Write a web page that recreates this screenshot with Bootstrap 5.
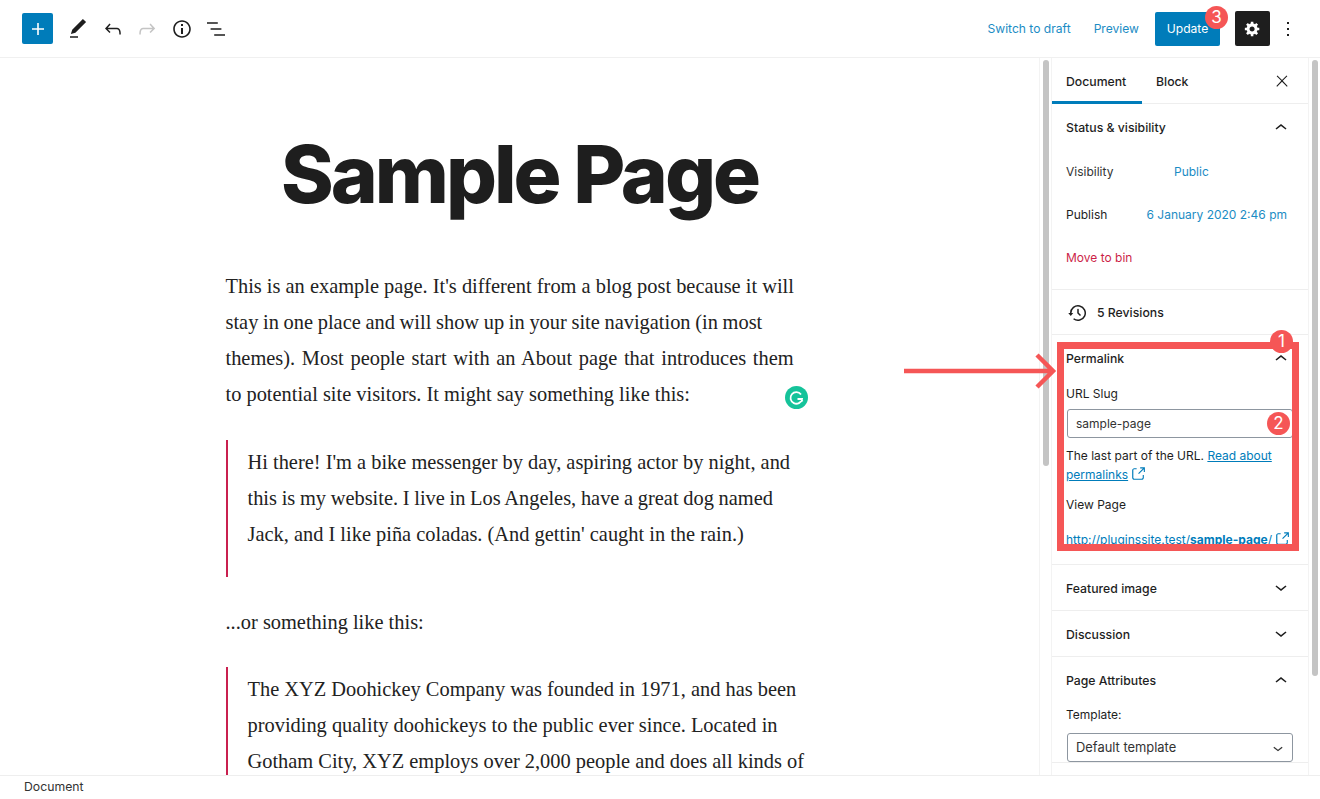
<!DOCTYPE html>
<html lang="en">
<head>
<meta charset="utf-8">
<title>Sample Page</title>
<link rel="stylesheet" href="https://cdn.jsdelivr.net/npm/bootstrap@5.3.0/dist/css/bootstrap.min.css">
<style>
html,body{height:100%;overflow:hidden}
body{font-family:Inter,"Liberation Sans",sans-serif;font-size:12px;color:#1e1e1e;background:#fff;position:relative}
svg{fill:currentColor;display:block;flex:none}
.wp-shell{height:799px}
.wp-top{height:58px;border-bottom:1px solid #f0f0f0;padding:0 20px 0 22px}
.wp-add{width:31px;height:31px;background:#007cba;border-radius:2px;color:#fff;padding:0}
.wp-tool{width:24px;height:24px;color:#1e1e1e}
.wp-tools{gap:10.5px;margin-left:13px}
.wp-dim{color:#c4c4c4}
.wp-link{color:#1b8cc4;font-size:12.1px;text-decoration:none;padding-top:2px}
.wp-gap-a{margin-right:23px}
.wp-update{background:#007cba;color:#fff;font-size:12.1px;width:65px;height:34px;padding:1px 0 0;margin-top:1px;border-radius:2px;border:0}
.wp-gear{width:35px;height:35px;background:#1e1e1e;color:#fff;border-radius:2px;padding:0;border:0;margin-left:15px}
.wp-kebab{margin-left:6px}
.wp-main{height:717px;overflow:hidden}
.wp-canvas{width:1040px;overflow:hidden;height:100%;border-right:1px solid #f3f3f3}
.wp-title{font-family:Inter,"Liberation Sans",sans-serif;font-weight:800;font-size:80px;letter-spacing:-3px;line-height:1;text-align:center;margin:76px 0 0;color:#1e1e1e}
.wp-column{width:588px;margin:54px auto 0;font-family:"Liberation Serif",serif;font-size:20.4px;line-height:36px;color:#222;white-space:nowrap}
.wp-para{margin:0}
.wp-wide{word-spacing:1.6px}
.wp-tight{word-spacing:-.4px}
.wp-quote{border-left:2px solid #c9204f;padding:4px 0 0 20px;margin:28px 0 27px;height:137px}
.wp-quote-b{height:200px;margin:27px 0 0;padding-top:4px}
.wp-thumb{background:#c4c4c4;width:6px;border-radius:3px}
.wp-rail{width:11px;padding-top:2px}
.wp-thumb-a{height:406px}
.wp-thumb-b{height:616px}
.wp-side{width:258px;border-left:1px solid #f3f3f3;border-right:1px solid #f3f3f3;overflow:hidden;height:100%}
.wp-rail-b{width:11px;padding:2px 0 0 3px}
.wp-tabs{height:46px;border-bottom:1px solid #eee;padding-right:17px}
.wp-tab{font-weight:500;font-size:12.25px;height:46px;padding:0 14px;line-height:47px}
.wp-tab-on{border-bottom:3px solid #007cba;width:90px}
.wp-sect{border-bottom:1px solid #eee;padding:0 15px 0 14px}
.wp-head{font-weight:500;font-size:12.25px;height:46px;color:#1e1e1e}
.wp-sect.wp-head{padding-top:3px}
.wp-down{margin-top:-4px}
.wp-close{width:18px;height:18px;margin-top:14px}
.wp-status{height:186px;padding-top:1px}
.wp-row{height:42.5px}
.wp-vlabel{width:108px;color:#333}
.wp-blue{color:#1b8cc4}
.wp-date{margin-right:6px}
.wp-bin{color:#cc1f48;padding-top:1px}
.wp-rev{height:45px;font-weight:500;font-size:12.25px;gap:7px;padding-top:2px}
.wp-perma{height:230px;padding-top:1px}
.wp-lab{line-height:20px}
.wp-lab-a{margin-top:2px}
.wp-slug{display:block;width:226px;height:29px;border:1px solid #8d96a0;border-radius:3px;padding:0 8px;font-size:12px;color:#333;background:#fff;margin:5px 0 8px 1px;outline:0}
.wp-help{line-height:19px;margin:0}
.wp-help a,.wp-perma-link{color:#007cba}
.wp-help svg,.wp-perma-link svg{display:inline-block;vertical-align:-4px}
.wp-ext-a{margin-left:-3px}
.wp-ext-b{margin-left:-2px}
.wp-lab-b{margin-top:11px}
.wp-perma-link{text-decoration:none;white-space:nowrap;display:block;margin-top:15px}
.wp-perma-link span{text-decoration:underline}
.wp-pad{padding-top:1px}
.wp-select{width:226px;height:29px;border:1px solid #8d96a0;border-radius:3px;padding:0 4px 0 8px;margin:8px 0 0 1px;color:#333;font-size:12.9px}
.wp-lab-c{margin-top:1px}
.wp-foot{height:24px;border-top:1px solid #eee;padding-left:24px;background:#fff;position:relative;color:#333;font-size:12.25px}
.wp-box{position:absolute;left:1057px;top:342px;width:242px;height:209px;border:7px solid #f55656;pointer-events:none}
.wp-num{position:absolute;width:23px;height:23px;border-radius:50%;background:#f55656;color:#fff;font-size:17px;line-height:23px;text-align:center}
.wp-n1{left:1270px;top:330px}
.wp-n2{left:1267px;top:412px}
.wp-n3{left:1205px;top:6px}
.wp-arrow{position:absolute;left:904px;top:352px;color:#f55656}
.wp-gram{position:absolute;left:785px;top:386px}
.wp-ico18{width:18px;height:18px}
.wp-ico20{width:20px;height:20px}
.wp-chev{width:24px;height:24px}
</style>
</head>
<body>
<div class="wp-shell d-flex flex-column">
  <header class="wp-top d-flex align-items-center">
    <button class="btn wp-add d-flex align-items-center justify-content-center" aria-label="Add block"><svg width="24" height="24" viewBox="0 0 24 24"><path d="M18 11.2h-5.2V6h-1.6v5.2H6v1.6h5.2V18h1.6v-5.2H18z"/></svg></button>
    <div class="wp-tools d-flex align-items-center">
      <svg class="wp-tool" viewBox="0 0 24 24"><path d="M20.1 5.1L16.9 2 6.2 12.7l-1.3 4.4 4.5-1.3L20.1 5.1zM4 20.8h8v-1.5H4v1.5z"/></svg>
      <svg class="wp-tool" viewBox="0 0 24 24"><path d="M18.3 11.7c-.6-.6-1.4-.9-2.3-.9H6.7l2.9-3.3-1.1-1-4.5 5L8.5 16l1-1-2.7-2.7H16c.5 0 .9.2 1.3.5 1 1 1 3.4 1 4.5v.3h1.5v-.2c0-1.5 0-4.3-1.5-5.7z"/></svg>
      <svg class="wp-tool wp-dim" viewBox="0 0 24 24"><path d="M15.6 6.5l-1.1 1 2.9 3.3H8c-.9 0-1.7.3-2.3.9-1.4 1.5-1.4 4.2-1.4 5.6v.2h1.5v-.3c0-1.1 0-3.5 1-4.5.3-.3.7-.5 1.3-.5h9.2L14.5 15l1.1 1.1 4.6-4.6-4.6-5z"/></svg>
      <svg class="wp-tool" viewBox="0 0 24 24"><path d="M12 3.2c-4.8 0-8.8 3.9-8.8 8.8 0 4.8 3.9 8.8 8.8 8.8 4.8 0 8.8-3.9 8.8-8.8 0-4.8-4-8.8-8.8-8.8zm0 16c-4 0-7.2-3.3-7.2-7.2C4.8 8 8 4.8 12 4.8s7.2 3.3 7.2 7.2c0 4-3.2 7.2-7.2 7.2zM11 17h2v-6h-2v6zm0-8h2V7h-2v2z"/></svg>
      <svg class="wp-tool" viewBox="0 0 24 24"><path d="M13.8 5.2H3v1.5h10.8V5.2zm-3.6 12v1.5H21v-1.5H10.2zm7.2-6H6.6v1.5h10.8v-1.5z"/></svg>
    </div>
    <div class="ms-auto d-flex align-items-center">
      <a class="wp-link wp-gap-a" href="#">Switch to draft</a>
      <a class="wp-link me-3" href="#">Preview</a>
      <button class="btn wp-update">Update</button>
      <button class="btn wp-gear d-flex align-items-center justify-content-center" aria-label="Settings"><svg width="17" height="17" viewBox="0 0 20 20"><path d="M18 12h-2.18c-.17.7-.44 1.35-.81 1.93l1.54 1.54-2.1 2.1-1.54-1.54c-.58.36-1.23.63-1.91.79V19H8v-2.18c-.68-.16-1.33-.43-1.91-.79l-1.54 1.54-2.12-2.12 1.54-1.54c-.36-.58-.63-1.23-.79-1.91H1V9.03h2.17c.16-.7.44-1.35.8-1.94L2.43 5.55l2.1-2.1 1.54 1.54c.58-.37 1.24-.64 1.93-.81V2h3v2.18c.68.16 1.33.43 1.91.79l1.54-1.54 2.12 2.12-1.54 1.54c.36.59.64 1.24.8 1.94H18V12zm-8.5 1.5c1.66 0 3-1.34 3-3s-1.34-3-3-3-3 1.34-3 3 1.34 3 3 3z"/></svg></button>
      <svg class="wp-tool wp-kebab" viewBox="0 0 24 24"><path d="M13 19h-2v-2h2v2zm0-6h-2v-2h2v2zm0-6h-2V5h2v2z"/></svg>
    </div>
  </header>
  <main class="wp-main d-flex">
    <section class="wp-canvas flex-none">
      <h1 class="wp-title">Sample Page</h1>
      <div class="wp-column">
        <p class="wp-para">This is an example page. It's different from a blog post because it will<br><span class="wp-tight">stay in one place and will show up in your site navigation (in most</span><br><span class="wp-wide">themes). Most people start with an About page that introduces them</span><br>to potential site visitors. It might say something like this:</p>
        <blockquote class="wp-quote">Hi there! I'm a bike messenger by day, aspiring actor by night, and<br><span class="wp-tight">this is my website. I live in Los Angeles, have a great dog named</span><br>Jack, and I like piña coladas. (And gettin' caught in the rain.)</blockquote>
        <p class="wp-para">...or something like this:</p>
        <blockquote class="wp-quote wp-quote-b">The XYZ Doohickey Company was founded in 1971, and has been<br>providing quality doohickeys to the public ever since. Located in<br>Gotham City, XYZ employs over 2,000 people and does all kinds of</blockquote>
      </div>
    </section>
    <div class="wp-rail d-flex justify-content-center"><div class="wp-thumb wp-thumb-a"></div></div>
    <aside class="wp-side flex-none">
      <div class="wp-tabs d-flex align-items-start">
        <div class="wp-tab wp-tab-on">Document</div>
        <div class="wp-tab">Block</div>
        <svg class="ms-auto wp-close" viewBox="0 0 24 24"><path d="M13 11.8l6.1-6.3-1-1-6.1 6.2-6.1-6.2-1 1 6.1 6.3-6.5 6.7 1 1 6.5-6.6 6.5 6.6 1-1z"/></svg>
      </div>
      <section class="wp-sect wp-status">
        <div class="wp-head d-flex align-items-center justify-content-between">Status &amp; visibility<svg class="wp-chev" viewBox="0 0 24 24"><path d="M6.5 12.4L12 8l5.5 4.4-.9 1.2L12 10l-4.5 3.6-1-1.2z"/></svg></div>
        <div class="wp-row d-flex align-items-center"><span class="wp-vlabel">Visibility</span><span class="wp-blue">Public</span></div>
        <div class="wp-row d-flex align-items-center justify-content-between"><span>Publish</span><span class="wp-blue wp-date">6 January 2020 2:46 pm</span></div>
        <div class="wp-row d-flex align-items-center wp-bin">Move to bin</div>
      </section>
      <section class="wp-sect wp-rev d-flex align-items-center"><svg width="24" height="24" viewBox="0 0 24 24"><path d="M5.5 12h1.75l-2.5 3-2.5-3H4a8 8 0 113.134 6.35l.907-1.194A6.5 6.5 0 105.5 12zm9.53 1.97l-2.28-2.28V8.5a.75.75 0 00-1.5 0V12.3l2.72 2.73 1.06-1.06z"/></svg>5 Revisions</section>
      <section class="wp-sect wp-perma">
        <div class="wp-head d-flex align-items-center justify-content-between">Permalink<svg class="wp-chev" viewBox="0 0 24 24"><path d="M6.5 12.4L12 8l5.5 4.4-.9 1.2L12 10l-4.5 3.6-1-1.2z"/></svg></div>
        <div class="wp-lab wp-lab-a">URL Slug</div>
        <input class="wp-slug" value="sample-page" aria-label="URL Slug">
        <p class="wp-help">The last part of the URL. <a href="#">Read about</a> <a href="#">permalinks</a> <a href="#"><svg class="wp-ico18 wp-ext-a" viewBox="0 0 24 24"><path d="M18.2 17c0 .7-.6 1.2-1.2 1.2H7c-.7 0-1.2-.6-1.2-1.2V7c0-.7.6-1.2 1.2-1.2h3.2V4.2H7C5.5 4.2 4.2 5.5 4.2 7v10c0 1.5 1.2 2.8 2.8 2.8h10c1.5 0 2.8-1.2 2.8-2.8v-3.6h-1.5V17zM14.9 3v1.5h3.7l-6.4 6.4 1.1 1.1 6.4-6.4v3.7h1.5V3h-6.3z"/></svg></a></p>
        <div class="wp-lab wp-lab-b">View Page</div>
        <a class="wp-perma-link" href="#"><span>http://pluginssite.test/<b>sample-page</b>/</span> <svg class="wp-ico18 wp-ext-b" viewBox="0 0 24 24"><path d="M18.2 17c0 .7-.6 1.2-1.2 1.2H7c-.7 0-1.2-.6-1.2-1.2V7c0-.7.6-1.2 1.2-1.2h3.2V4.2H7C5.5 4.2 4.2 5.5 4.2 7v10c0 1.5 1.2 2.8 2.8 2.8h10c1.5 0 2.8-1.2 2.8-2.8v-3.6h-1.5V17zM14.9 3v1.5h3.7l-6.4 6.4 1.1 1.1 6.4-6.4v3.7h1.5V3h-6.3z"/></svg></a>
      </section>
      <section class="wp-sect wp-head d-flex align-items-center justify-content-between">Featured image<svg class="wp-chev wp-down" viewBox="0 0 24 24"><path d="M17.5 11.6L12 16l-5.5-4.4.9-1.2L12 14l4.5-3.6 1 1.2z"/></svg></section>
      <section class="wp-sect wp-head d-flex align-items-center justify-content-between">Discussion<svg class="wp-chev wp-down" viewBox="0 0 24 24"><path d="M17.5 11.6L12 16l-5.5-4.4.9-1.2L12 14l4.5-3.6 1 1.2z"/></svg></section>
      <section class="wp-sect wp-pad">
        <div class="wp-head d-flex align-items-center justify-content-between">Page Attributes<svg class="wp-chev" viewBox="0 0 24 24"><path d="M6.5 12.4L12 8l5.5 4.4-.9 1.2L12 10l-4.5 3.6-1-1.2z"/></svg></div>
        <div class="wp-lab wp-lab-c">Template:</div>
        <div class="wp-select d-flex align-items-center justify-content-between">Default template<svg class="wp-ico20" viewBox="0 0 24 24"><path d="M17.5 11.6L12 16l-5.5-4.4.9-1.2L12 14l4.5-3.6 1 1.2z"/></svg></div>
      </section>
    </aside>
    <div class="wp-rail-b"><div class="wp-thumb wp-thumb-b"></div></div>
  </main>
  <footer class="wp-foot d-flex align-items-center">Document</footer>
</div>
<div class="wp-box"></div>
<svg class="wp-arrow" width="156" height="38" viewBox="0 0 156 38"><path d="M0 19H148M133 3l16 16-16 16" fill="none" stroke="currentColor" stroke-width="4.5"/></svg>
<svg class="wp-gram" width="23" height="23" viewBox="0 0 23 23"><circle cx="11.5" cy="11.500" r="11.5" fill="#15c39a"/><path d="M16 8.500a5.800 5.800 0 1 0 1 4.500h-4.500M16 13l1.500 2.500" fill="none" stroke="#fff" stroke-width="1.800"/></svg>
<span class="wp-num wp-n1">1</span>
<span class="wp-num wp-n2">2</span>
<span class="wp-num wp-n3">3</span>
<script src="https://cdn.jsdelivr.net/npm/bootstrap@5.3.0/dist/js/bootstrap.bundle.min.js"></script>
</body>
</html>
